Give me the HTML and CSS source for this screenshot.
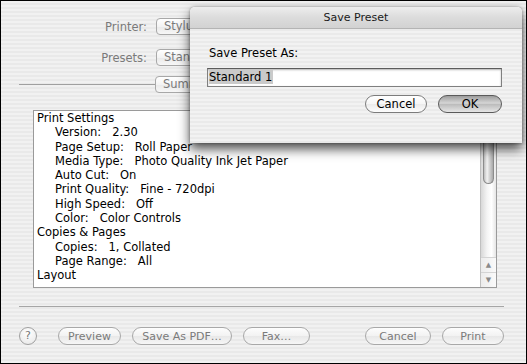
FILE: index.html
```html
<!DOCTYPE html>
<html lang="en">
<head>
  <meta charset="UTF-8" />
  <title>Print</title>
  <link rel="stylesheet" href="styles.css">
</head>
<body>
  <div id="print-window">
    <div class="field-row">
      <span class="field-label">Printer:</span>
      <div class="popup">Stylus Photo 2200</div>
    </div>
    <div class="field-row presets">
      <span class="field-label">Presets:</span>
      <div class="popup">Standard</div>
    </div>
    <div class="pane-row">
      <div class="rule"></div>
      <div class="popup">Summary</div>
    </div>

    <div id="summary-list">
      <div class="list-text">
        <div class="group">Print Settings</div>
        <div class="item">Version:<span class="val">2.30</span></div>
        <div class="item">Page Setup:<span class="val">Roll Paper</span></div>
        <div class="item">Media Type:<span class="val">Photo Quality Ink Jet Paper</span></div>
        <div class="item">Auto Cut:<span class="val">On</span></div>
        <div class="item">Print Quality:<span class="val">Fine - 720dpi</span></div>
        <div class="item">High Speed:<span class="val">Off</span></div>
        <div class="item">Color:<span class="val">Color Controls</span></div>
        <div class="group">Copies &amp; Pages</div>
        <div class="item">Copies:<span class="val">1, Collated</span></div>
        <div class="item">Page Range:<span class="val">All</span></div>
        <div class="group">Layout</div>
      </div>
      <div class="scrollbar">
        <div class="thumb"></div>
        <div class="arrow">&#9650;</div>
        <div class="arrow">&#9660;</div>
      </div>
    </div>

    <div class="separator"></div>

    <div class="button-bar">
      <button class="help">?</button>
      <button class="btn preview">Preview</button>
      <button class="btn pdf">Save As PDF…</button>
      <button class="btn fax">Fax…</button>
      <div class="spacer"></div>
      <button class="btn cancel">Cancel</button>
      <button class="btn print">Print</button>
    </div>

    <div id="save-preset">
      <div class="title-bar">Save Preset</div>
      <div class="sheet-body">
        <div class="prompt">Save Preset As:</div>
        <div class="text-field"><span class="selected">Standard 1</span></div>
        <div class="sheet-buttons">
          <button class="aqua cancel-sheet">Cancel</button>
          <button class="aqua default">OK</button>
        </div>
      </div>
    </div>
  </div>
</body>
</html>
```

FILE: styles.css
```css
body {
  margin: 0;
  font-family: "DejaVu Sans", "Lucida Grande", sans-serif;
  font-size: 11px;
}
#print-window {
  position: relative;
  box-sizing: border-box;
  width: 527px;
  height: 364px;
  border: 1px solid #000;
  padding-top: 17px;
  overflow: hidden;
  background: repeating-linear-gradient(to bottom, #f1f1f1 0, #f1f1f1 2px, #e9e9e9 2px, #e9e9e9 4px);
}
.field-row {
  display: flex;
  align-items: center;
  height: 17px;
  margin-bottom: 14px;
}
.field-row.presets {
  margin-bottom: 10px;
}
.field-label {
  width: 146px;
  text-align: right;
  color: #7a7a7a;
  margin-right: 9px;
  font-size: 11.5px;
}
.popup {
  box-sizing: border-box;
  width: 200px;
  height: 17px;
  line-height: 15px;
  padding-left: 7px;
  border: 1px solid #a8a8a8;
  border-radius: 4px;
  background: linear-gradient(to bottom, #ffffff, #f3f3f3 50%, #e9e9e9 51%, #f7f7f7);
  color: #7a7a7a;
  font-size: 11.5px;
  white-space: nowrap;
}
.pane-row {
  display: flex;
  align-items: center;
  height: 17px;
  padding-left: 18px;
}
.pane-row .rule {
  width: 136px;
  height: 1px;
  background: #a0a0a0;
}
#summary-list {
  display: flex;
  box-sizing: border-box;
  width: 464px;
  height: 178px;
  margin: 17px 0 0 32px;
  border: 1px solid #9a9a9a;
  border-right: none;
  background: #fff;
}
.list-text {
  flex: 1;
  padding-left: 3px;
  font-size: 11.5px;
  line-height: 14.3px;
  color: #000;
  white-space: nowrap;
  overflow: hidden;
}
.item {
  padding-left: 18px;
}
.val {
  margin-left: 11px;
}
.scrollbar {
  display: flex;
  flex-direction: column;
  width: 15px;
  border-left: 1px solid #c0c0c0;
  border-right: 1px solid #9a9a9a;
  background: linear-gradient(to right, #d8d8d8, #f4f4f4 40%, #ffffff 70%, #e6e6e6);
}
.thumb {
  height: 72px;
  margin: 0 2px;
  border: 1px solid #8c8c8c;
  border-top: none;
  border-radius: 0 0 6px 6px;
  background: linear-gradient(to right, #bdbdbd, #f2f2f2 35%, #d4d4d4 60%, #a8a8a8);
  margin-bottom: auto;
}
.arrow {
  height: 14px;
  line-height: 14px;
  text-align: center;
  font-size: 7px;
  color: #8a8a8a;
  border-top: 1px solid #d4d4d4;
  background: linear-gradient(to right, #ececec, #fafafa);
}
.separator {
  height: 1px;
  margin: 18px 22px 0 18px;
  background: #a6a6a6;
}
.button-bar {
  display: flex;
  align-items: center;
  margin: 20px 22px 0 18px;
  gap: 11px;
}
button {
  font-family: "DejaVu Sans", "Lucida Grande", sans-serif;
  font-size: 11px;
  margin: 0;
  padding: 0;
  cursor: default;
}
.help {
  width: 18px;
  height: 18px;
  margin-right: 10px;
  border: 1px solid #a0a0a0;
  border-radius: 50%;
  background: radial-gradient(circle at 50% 30%, #ffffff, #e6e6e6);
  color: #777;
  font-size: 11px;
  line-height: 16px;
}
.btn {
  height: 18px;
  border: 1px solid #a8a8a8;
  border-radius: 9px;
  background: linear-gradient(to bottom, #fdfdfd, #f2f2f2 50%, #e8e8e8 51%, #f6f6f6);
  color: #7a7a7a;
}
.preview { width: 63px; }
.pdf { width: 100px; }
.fax { width: 67px; }
.cancel { width: 66px; }
.print { width: 62px; }
.spacer {
  flex: 1;
}
#save-preset {
  position: absolute;
  left: 189px;
  top: 6px;
  width: 332px;
  height: 136px;
  border-radius: 5px 5px 0 0;
  box-shadow: 0 6px 12px rgba(0, 0, 0, 0.7), 0 0 3px rgba(0, 0, 0, 0.35);
  background: repeating-linear-gradient(to bottom, #f2f2f2 0, #f2f2f2 2px, #eaeaea 2px, #eaeaea 4px);
  overflow: hidden;
}
.title-bar {
  height: 21px;
  line-height: 21px;
  text-align: center;
  color: #1a1a1a;
  border-bottom: 1px solid #b4b4b4;
  background: linear-gradient(to bottom, #ededed, #dcdcdc 50%, #d2d2d2);
}
.sheet-body {
  padding: 17px 20px 0 18px;
}
.prompt {
  color: #000;
  height: 14px;
  line-height: 14px;
  padding-left: 1px;
  font-size: 11.5px;
}
.text-field {
  box-sizing: border-box;
  height: 19px;
  margin: 8px 0 0 -1px;
  padding: 1px 0 0 1px;
  border: 1px solid #7f7f7f;
  border-top-color: #5c5c5c;
  box-shadow: inset 0 1px 2px rgba(0, 0, 0, 0.3);
  background: #fff;
  line-height: 15px;
  font-size: 11.5px;
}
.selected {
  background: #cacaca;
  padding-right: 1px;
}
.sheet-buttons {
  display: flex;
  justify-content: flex-end;
  gap: 11px;
  margin-top: 8px;
}
.aqua {
  height: 18px;
  border-radius: 9px;
  color: #000;
  font-size: 11.5px;
}
.cancel-sheet {
  width: 62px;
  border: 1px solid #7c7c7c;
  background: linear-gradient(to bottom, #ffffff, #f6f6f6 50%, #ebebeb 51%, #fdfdfd);
}
.default {
  width: 64px;
  border: 1px solid #5a5a5a;
  background: linear-gradient(to bottom, #9c9c9c, #d6d6d6 45%, #bcbcbc 52%, #e6e6e6);
}
```
